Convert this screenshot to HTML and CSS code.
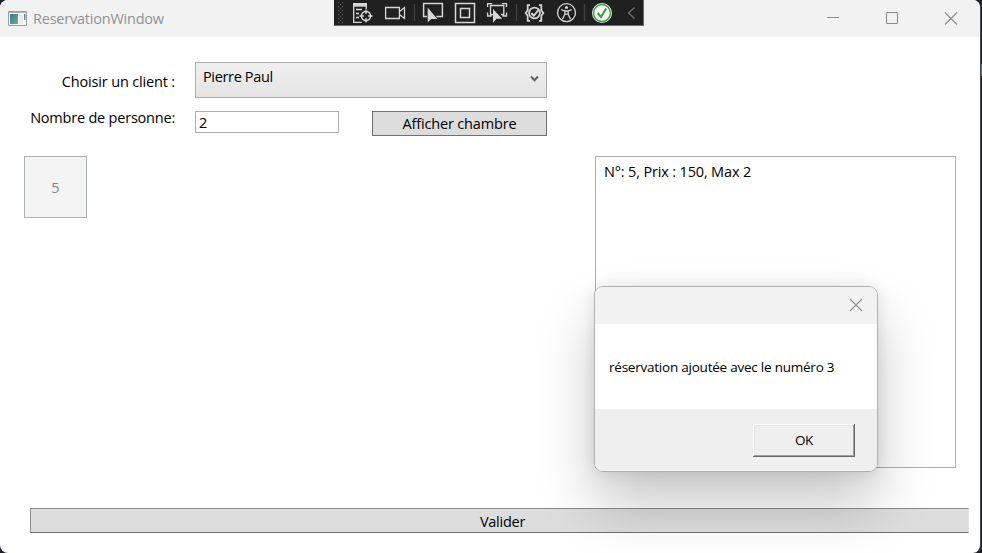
FILE: index.html
```html
<!DOCTYPE html>
<html lang="fr">
<head>
<meta charset="utf-8">
<title>ReservationWindow</title>
<link rel="stylesheet" href="styles.css">
</head>
<body>
<div class="window">
  <header class="titlebar">
    <svg class="app-icon" width="19" height="16" viewBox="0 0 19 16">
      <defs><linearGradient id="g" x2="1" y2="1"><stop stop-color="#3d72a3"/><stop offset="1" stop-color="#62b878"/></linearGradient></defs>
      <path fill="#fafafa" stroke="#9a9da0" d="M.5.5h18v14H.5z"/><path stroke="#adb3b8" d="M1 1.5h17"/>
      <path fill="url(#g)" d="M2 3h8v10H2z"/><path fill="#e9ecef" d="M11 3h4v10h-4z"/><path fill="url(#g)" d="M16 3h1.5v6H16z"/>
    </svg>
    <span class="title">ReservationWindow</span>
    <div class="controls">
      <svg width="14" height="14" viewBox="0 0 14 14"><path d="M1 5.5h12"/></svg>
      <svg width="14" height="14" viewBox="0 0 14 14"><rect x="1.5" y=".5" width="11" height="11" rx="1"/></svg>
      <svg width="14" height="14" viewBox="0 0 14 14"><path d="M1 .5l12 12M13 .5L1 12.5"/></svg>
    </div>
  </header>
  <main class="content">
    <div class="form">
      <label class="label label-client"><span class="t-client">Choisir un client :</span></label>
      <div class="combo"><span class="t-name">Pierre Paul</span>
        <svg width="9" height="8" viewBox="0 0 9 8"><path d="M1 1.5l3.5 3.7L8 1.5" fill="none" stroke="#606060" stroke-width="2"/></svg>
      </div>
      <label class="label label-count"><span class="t-count">Nombre de personne:</span></label>
      <div class="textbox">2</div>
      <div class="button show"><span class="t-show">Afficher chambre</span></div>
    </div>
    <div class="rooms">
      <div class="room">5</div>
      <div class="list"><span class="t-list">N°: 5, Prix : 150, Max 2</span></div>
    </div>
    <div class="button validate"><span class="t-validate">Valider</span></div>
  </main>
</div>
<div class="toolbar">
  <svg width="310" height="26" viewBox="334 0 310 26" fill="none" stroke="#d6d6d6" stroke-width="1.3">
    <path d="M338.5 2v22M342.5 2v22" stroke="#5c5c5c" stroke-width="1.3" stroke-dasharray="1.3 2.7"/><path d="M340.5 4v20" stroke="#5c5c5c" stroke-width="1.3" stroke-dasharray="1.3 2.7"/>
    <path d="M353.7 3v19.3h8M366.3 6v3" /><path d="M353 3h14v3.7h-14z" fill="#d6d6d6" stroke="none"/><path d="M356 9.5h6M356 13.5h3M356 17.5h3"/>
    <circle cx="366" cy="16" r="4.6" stroke-width="1.6"/><path d="M366 9.5v4.5M366 18v4.5M359.5 16h4.5M368 16h4.5"/>
    <path d="M385.6 7.5h13.8v11h-13.8zM399.5 11.5l5-4v11l-5-4"/>
    <path d="M414.5 4v17M516.5 4v17M584.5 4v17" stroke="#414141"/>
    <path d="M427 16.5h-3.4v-13h18.8v13h-6" stroke-width="1.5"/><path d="M427.7 7.5v14.8l3.6-3.3h6z" fill="#d6d6d6" stroke="none"/>
    <path d="M455.5 3.5h19v19h-19zM460.5 8.5h9v9h-9z" stroke-width="1.5"/>
    <path d="M487.6 7V3.6h4.5M502 3.6h4.5V7M487.6 12.5V16h4M506.5 12.5V16h-4M493 14.5h-2.5v-9h13.3v9H501"/><path d="M493 9v13.7l3.6-4h5.6z" fill="#d6d6d6" stroke="none"/>
    <path d="M530 5.2h-2.3v5l-2 2.8 2 2.8v5h2.3M539 5.2h2.3v5l2 2.8-2 2.8v5H539" stroke-width="1.8"/>
    <circle cx="534.5" cy="13" r="5.4" stroke-width="1.8"/><path d="M531.3 13l2.5 2.8 5-6.3" stroke-width="2"/>
    <circle cx="566.5" cy="12.7" r="9"/><circle cx="566.5" cy="7.5" r="1.6" fill="#d6d6d6" stroke="none"/><path d="M561.3 9.7l3.5 1.3v3.2l-2.3 5M571.7 9.7l-3.5 1.3v3.2l2.3 5M564.8 11h3.4M564.8 14.2h3.4"/>
    <circle cx="602" cy="13" r="10" fill="#f4f4f4" stroke="none"/><circle cx="602" cy="13" r="8.5" stroke="#35a13a" stroke-width="1.4"/><path d="M597.7 13l3.3 4 5.2-8.5" stroke="#35a13a" stroke-width="2"/>
    <path d="M634.5 7.5L628.5 13l6 5.5" stroke="#707070"/>
  </svg>
</div>
<div class="dialog">
  <div class="dialog-title"><svg width="14" height="14" viewBox="0 0 14 14"><path d="M1 1l12 12M13 1L1 13"/></svg></div>
  <div class="dialog-body"><span class="t-message">réservation ajoutée avec le numéro 3</span></div>
  <div class="dialog-footer"><div class="ok">OK</div></div>
</div>
</body>
</html>
```
FILE: styles.css
```css
* { box-sizing: border-box; }
body {
  margin: 0;
  width: 982px;
  height: 553px;
  overflow: hidden;
  background: linear-gradient(#3a73b8, #3a73b8) 981px 64px / 1px 12px no-repeat, #202124;
  color: #000;
  font: 14.5px/20px "Open Sans", "Noto Sans", sans-serif;
  position: relative;
}
span { white-space: nowrap; }
.window {
  width: 981px;
  height: 553px;
  background: #fff;
  border-right: 1px solid #444;
  border-radius: 8px;
  overflow: hidden;
}
.titlebar {
  height: 37px;
  background: #f2f2f2;
  display: flex;
  align-items: center;
  padding: 0 22px 0 8px;
}
.app-icon { margin-right: 6px; }
.title { color: #929292; letter-spacing: -0.22px; }
.t-client { letter-spacing: -0.16px; }
.t-name { letter-spacing: -0.35px; }
.t-count { letter-spacing: -0.21px; }
.t-show { letter-spacing: -0.17px; }
.t-list { letter-spacing: -0.16px; }
.t-validate { letter-spacing: -0.25px; }
.t-message { letter-spacing: -0.23px; }
.controls { margin-left: auto; display: flex; gap: 45px; }
.controls svg, .dialog-title svg { fill: none; stroke: #8d8d8d; stroke-width: 1.1; }
.content { display: flex; flex-direction: column; padding: 25px 12px 0 24px; }
.form {
  display: grid;
  grid-template-columns: 171px 177px 175px;
  grid-template-rows: 36px 25px;
  row-gap: 13px;
  width: 523px;
}
.label { text-align: right; padding-right: 20px; }
.label-client { padding-top: 10px; }
.label-count { margin-top: -3px; }
.combo {
  grid-column: 2 / 4;
  border: 1px solid #acacac;
  background: linear-gradient(#f0f0f0, #e4e4e4);
  display: flex;
  justify-content: space-between;
  padding: 4px 7px;
}
.combo svg { margin-top: 8px; }
.textbox {
  width: 144px;
  height: 22px;
  border: 1px solid #abadb3;
  padding: 1px 3px;
}
.button {
  height: 25px;
  border: 1px solid #707070;
  background: #ddd;
  text-align: center;
  line-height: 24px;
}
.rooms {
  display: flex;
  justify-content: space-between;
  align-items: flex-start;
  margin-top: 20px;
  width: 932px;
}
.room {
  width: 63px;
  height: 62px;
  border: 1px solid #adb2b5;
  background: #f4f4f4;
  color: #838383;
  text-align: center;
  line-height: 61px;
}
.list {
  width: 361px;
  height: 312px;
  border: 1px solid #abadb3;
  padding: 5px 8px;
}
.validate {
  margin: 40px 0 0 6px;
  width: 939px;
  border-color: #8b8b8b #e2e2e2 #707070 #8b8b8b;
  padding-left: 6px;
  line-height: 25px;
}
.toolbar {
  position: absolute;
  left: 334px;
  top: 0;
  width: 310px;
  height: 26px;
  background: #202020;
  border-bottom: 1px solid #696969;
  border-right: 1px solid #696969;
}
.toolbar svg { display: block; }
.dialog {
  position: absolute;
  left: 594px;
  top: 286px;
  width: 284px;
  height: 186px;
  border: 1px solid #b0b0b0;
  border-radius: 9px;
  background: #fff;
  box-shadow: 0 32px 56px rgba(0, 0, 0, .22), 0 0 16px rgba(0, 0, 0, .1);
  overflow: hidden;
  font-size: 13.5px;
}
.dialog-title {
  height: 37px;
  background: #f2f2f2;
  padding: 11px 14px;
  text-align: right;
  line-height: 0;
}
.dialog-body { height: 85px; padding: 33px 14px; }
.dialog-footer {
  height: 62px;
  background: #efefef;
  padding: 15px 22px;
  display: flex;
  justify-content: flex-end;
}
.ok {
  width: 102px;
  height: 33px;
  text-align: center;
  line-height: 32px;
  letter-spacing: -0.3px;
  box-shadow: inset -1px -1px #696969, inset 1px 1px #fff, inset -2px -2px #a0a0a0, inset 2px 2px #e3e3e3;
}
```
